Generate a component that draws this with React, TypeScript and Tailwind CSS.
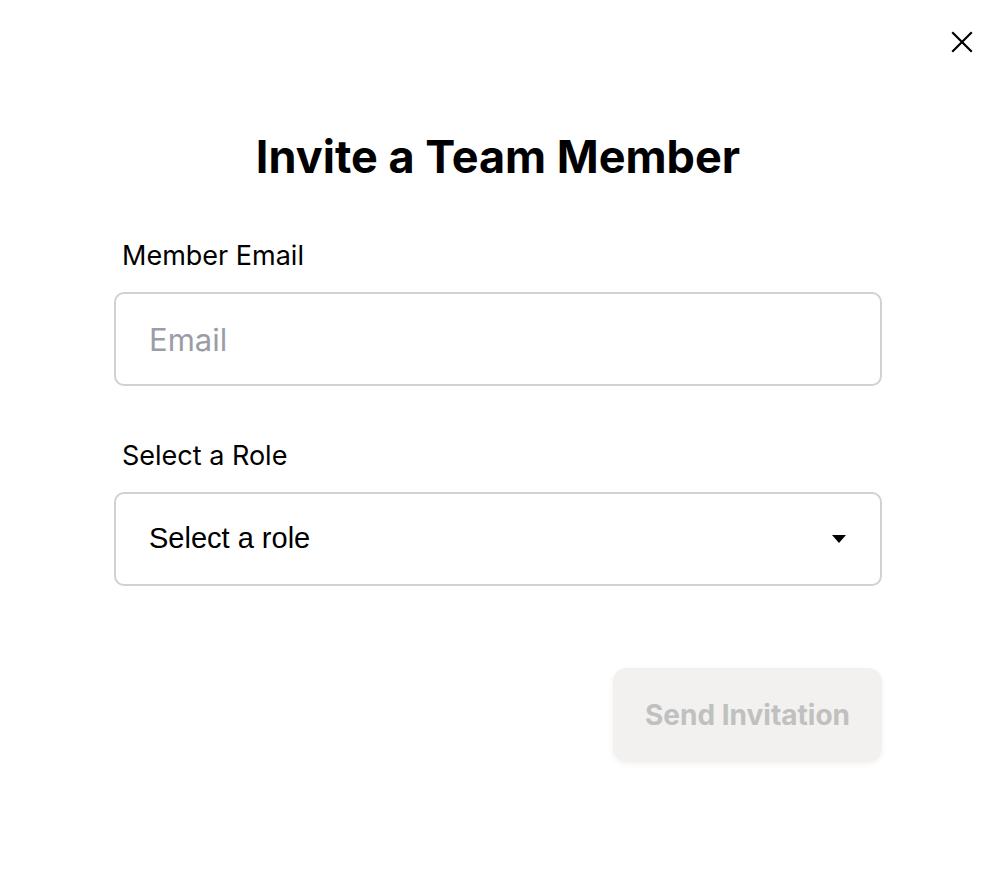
export default function App() {
  return (
    <main className="relative h-[886px] w-full bg-white font-['Inter',sans-serif] text-black">
      <button className="absolute right-[20px] top-[30px] flex h-[24px] w-[24px] items-center justify-center" aria-label="Close">
        <svg width="22" height="22" viewBox="0 0 22 22" fill="none" stroke="black" strokeWidth="2.2" strokeLinecap="square">
          <path d="M2 2L20 20M20 2L2 20" />
        </svg>
      </button>
      <div className="ml-[114px] flex w-[768px] flex-col pt-[127px]">
        <h1 className="text-center text-[45px] font-bold leading-[60px]">Invite a Team Member</h1>
        <label className="mt-[52px] pl-[8px] text-[27px] leading-[34px]">Member Email</label>
        <input
          className="mt-[19px] h-[94px] rounded-[10px] border-2 border-[#d1d1d1] px-[33px] text-[31px] outline-none placeholder:text-[#9a9ca8]"
          placeholder="Email"
        />
        <label className="mt-[53px] pl-[8px] text-[27px] leading-[34px]">Select a Role</label>
        <div className="mt-[19px] flex h-[94px] items-center justify-between rounded-[10px] border-2 border-[#d1d1d1] pl-[33px] pr-[34px]">
          <span className="font-['Liberation_Sans',sans-serif] text-[29px]">Select a role</span>
          <svg width="14" height="8" viewBox="0 0 14 8">
            <path d="M0 0H14L7 8Z" fill="black" />
          </svg>
        </div>
        <div className="mt-[82px] flex justify-end">
          <button
            disabled
            className="h-[94px] w-[269px] rounded-[14px] bg-[#f2f1f0] text-[28px] font-bold text-[#c0c0c0] shadow-[0_2px_6px_rgba(0,0,0,0.06)]"
          >
            Send Invitation
          </button>
        </div>
      </div>
    </main>
  );
}
